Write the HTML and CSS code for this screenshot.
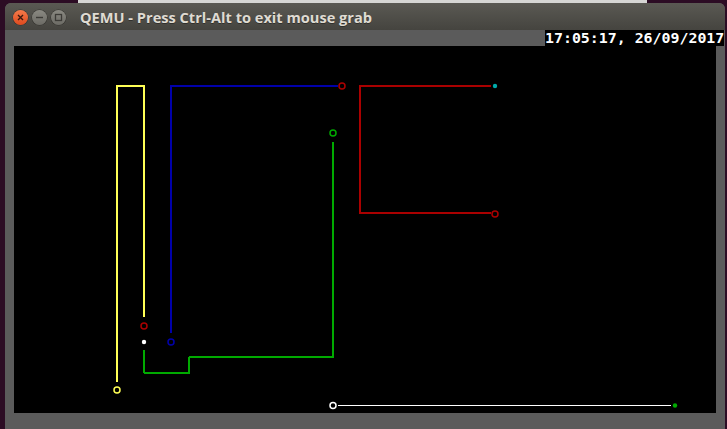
FILE: index.html
```html
<!DOCTYPE html>
<html>
<head>
<meta charset="utf-8">
<link rel="stylesheet" href="styles.css">
</head>
<body>
<div class="desktop-top"></div>
<div class="window">
  <div class="titlebar">
    <div class="buttons">
      <span class="btn close"><svg width="15" height="15" viewBox="0 0 15 15"><path d="M5 5 L10 10 M10 5 L5 10" stroke="#3a1a10" stroke-width="1.4" fill="none"/></svg></span>
      <span class="btn"><svg width="15" height="15" viewBox="0 0 15 15"><path d="M4 7.5 H11" stroke="#3c3b37" stroke-width="1.4" fill="none"/></svg></span>
      <span class="btn"><svg width="15" height="15" viewBox="0 0 15 15"><rect x="4.5" y="4.5" width="6" height="6" stroke="#3c3b37" stroke-width="1.3" fill="none"/></svg></span>
    </div>
    <div class="title">QEMU - Press Ctrl-Alt to exit mouse grab</div>
  </div>
  <div class="frame">
    <div class="screen">
      <svg class="drawing" width="702" height="367" viewBox="14 46 702 367" shape-rendering="crispEdges">
        <g fill="none">
          <path d="M117 382 V86" stroke="#ffff55" stroke-width="2"/>
          <path d="M116 86 H145" stroke="#ffff55" stroke-width="2"/>
          <path d="M144 86 V317" stroke="#ffff55" stroke-width="2"/>
          <path d="M171 333 V86" stroke="#0000aa" stroke-width="2"/>
          <path d="M170 86 H338" stroke="#0000aa" stroke-width="1.5"/>
          <path d="M360 85 V213" stroke="#aa0000" stroke-width="2"/>
          <path d="M359 86 H491" stroke="#aa0000" stroke-width="1.5"/>
          <path d="M359 213 H491" stroke="#aa0000" stroke-width="1.5"/>
          <path d="M144 350 V373" stroke="#00aa00" stroke-width="2"/>
          <path d="M144 373 H190" stroke="#00aa00" stroke-width="1.2"/>
          <path d="M189 373 V357" stroke="#00aa00" stroke-width="2"/>
          <path d="M189 357 H334" stroke="#00aa00" stroke-width="1.2"/>
          <path d="M333 357 V142" stroke="#00aa00" stroke-width="2"/>
          <path d="M338 405.5 H671" stroke="#ffffff" stroke-width="1.2"/>
        </g>
        <g fill="none" stroke-width="1.5" shape-rendering="auto">
          <circle cx="342" cy="86" r="3" stroke="#aa0000"/>
          <circle cx="333" cy="133" r="3" stroke="#00aa00"/>
          <circle cx="495" cy="214" r="3" stroke="#aa0000"/>
          <circle cx="144" cy="326" r="3" stroke="#aa0000"/>
          <circle cx="171" cy="342" r="3" stroke="#0000aa"/>
          <circle cx="117" cy="390" r="3" stroke="#ffff55"/>
          <circle cx="333" cy="405.5" r="3" stroke="#ffffff"/>
        </g>
        <g shape-rendering="auto">
          <circle cx="495" cy="86" r="2.2" fill="#00aaaa"/>
          <circle cx="144" cy="342" r="2.2" fill="#ffffff"/>
          <circle cx="675" cy="405.5" r="2.2" fill="#00aa00"/>
        </g>
      </svg>
    </div>
  </div>
  <div class="clock">17:05:17, 26/09/2017</div>
</div>
</body>
</html>
```

FILE: styles.css
```css
html, body {
  margin: 0;
  padding: 0;
}
body {
  width: 727px;
  height: 429px;
  overflow: hidden;
  background: #2c0c24;
}
.desktop-top {
  height: 3px;
  background: linear-gradient(to right, #2c0c24 0, #2c0c24 78px, #d6d6d4 78px, #d6d6d4 647px, #2c0c24 647px);
}
.window {
  position: relative;
  margin-left: 5px;
  width: 720px;
  height: 426px;
  background: #5b5b5b;
  border-radius: 6px 6px 0 0;
}
.titlebar {
  height: 27px;
  display: flex;
  align-items: center;
  background: linear-gradient(to bottom, #5a5953, #45443f);
  border-radius: 6px 6px 0 0;
}
.buttons {
  display: flex;
  gap: 4px;
  padding-left: 8px;
  padding-top: 2px;
}
.btn {
  width: 15px;
  height: 15px;
  border-radius: 50%;
  background: linear-gradient(to bottom, #8a8982, #6c6b65);
  box-shadow: 0 0 0 0.5px #34332f;
  display: flex;
}
.btn.close {
  background: linear-gradient(to bottom, #f47a4a, #df4a1e);
}
.title {
  margin-left: 14px;
  font-family: "Open Sans", "DejaVu Sans", sans-serif;
  font-weight: 700;
  font-size: 14.6px;
  color: #dfdbd2;
  text-shadow: 0 1px 0 rgba(0, 0, 0, 0.35);
  white-space: nowrap;
}
.frame {
  padding: 16px 0 0 9px;
}
.screen {
  width: 702px;
  height: 367px;
  background: #000;
}
.drawing {
  display: block;
}
.clock {
  position: absolute;
  top: 27px;
  left: 540px;
  width: 179px;
  height: 16px;
  background: #000;
  color: #fff;
  font-family: "DejaVu Sans Mono", monospace;
  font-size: 14.9px;
  font-weight: 700;
  line-height: 16px;
  white-space: nowrap;
  overflow: hidden;
}
```
